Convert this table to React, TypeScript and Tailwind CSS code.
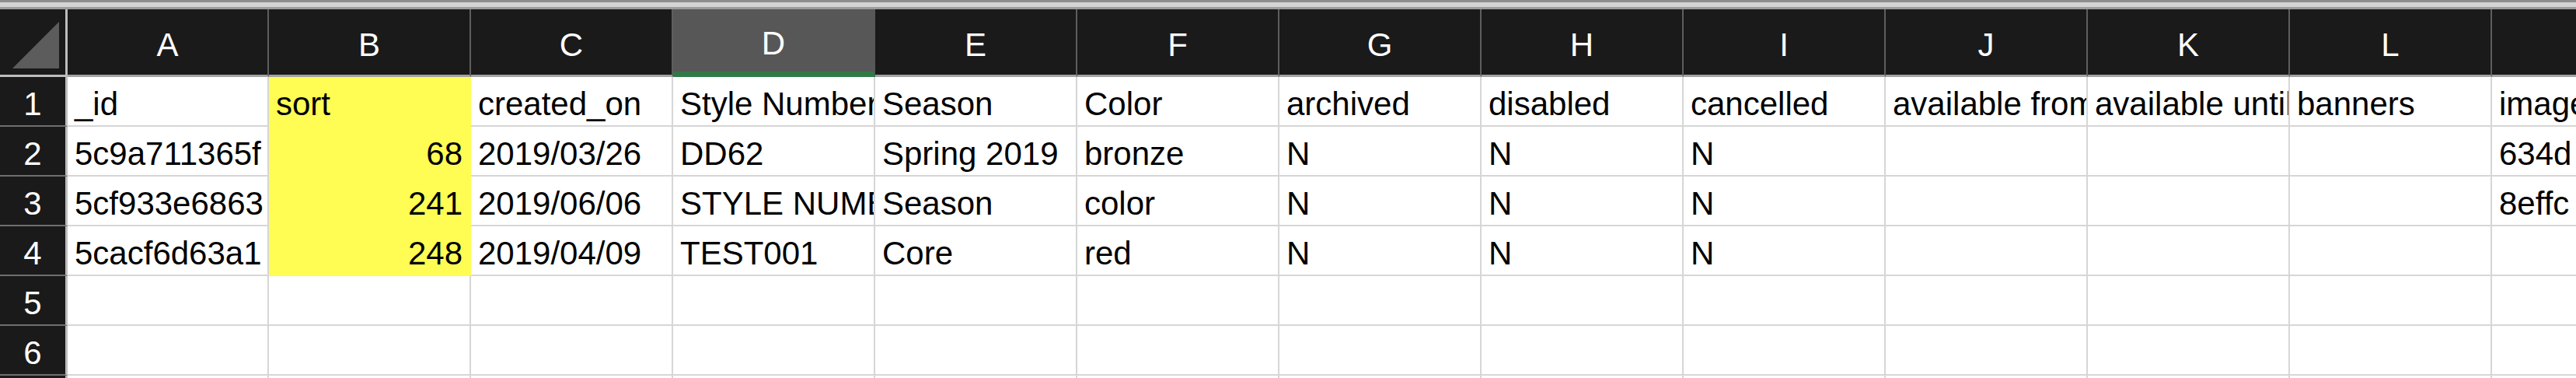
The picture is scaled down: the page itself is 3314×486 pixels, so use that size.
const letters = ["A", "B", "C", "D", "E", "F", "G", "H", "I", "J", "K", "L", "M"];

type Cell = { v: string; right?: boolean };

const rows: Cell[][] = [
	[
		{ v: "_id" },
		{ v: "sort" },
		{ v: "created_on" },
		{ v: "Style Number" },
		{ v: "Season" },
		{ v: "Color" },
		{ v: "archived" },
		{ v: "disabled" },
		{ v: "cancelled" },
		{ v: "available from" },
		{ v: "available until" },
		{ v: "banners" },
		{ v: "images" },
	],
	[
		{ v: "5c9a711365f" },
		{ v: "68", right: true },
		{ v: "2019/03/26" },
		{ v: "DD62" },
		{ v: "Spring 2019" },
		{ v: "bronze" },
		{ v: "N" },
		{ v: "N" },
		{ v: "N" },
		{ v: "" },
		{ v: "" },
		{ v: "" },
		{ v: "634d" },
	],
	[
		{ v: "5cf933e6863" },
		{ v: "241", right: true },
		{ v: "2019/06/06" },
		{ v: "STYLE NUMBER" },
		{ v: "Season" },
		{ v: "color" },
		{ v: "N" },
		{ v: "N" },
		{ v: "N" },
		{ v: "" },
		{ v: "" },
		{ v: "" },
		{ v: "8effc" },
	],
	[
		{ v: "5cacf6d63a1" },
		{ v: "248", right: true },
		{ v: "2019/04/09" },
		{ v: "TEST001" },
		{ v: "Core" },
		{ v: "red" },
		{ v: "N" },
		{ v: "N" },
		{ v: "N" },
		{ v: "" },
		{ v: "" },
		{ v: "" },
		{ v: "" },
	],
	[],
	[],
	[],
];

function colWidth(i: number) {
	return i === 0 ? "w-[259px]" : "w-[260px]";
}

function DataCell({ cell, col, yellow }: { cell?: Cell; col: number; yellow: boolean }) {
	return (
		<div
			className={`${colWidth(col)} shrink-0 h-[64px] flex items-end pb-[6px] px-[9px] overflow-hidden whitespace-nowrap border-r-2 border-b-2 ${
				yellow ? "bg-[#fffc54] border-[#fffc54]" : "bg-white border-[#d6d6d6]"
			} ${cell?.right ? "justify-end" : "justify-start"}`}
		>
			<span className="text-black">{cell?.v}</span>
		</div>
	);
}

export default function App() {
	return (
		<div className="w-[3314px] h-[486px] overflow-hidden bg-white font-['Liberation_Sans',Arial,sans-serif] text-[42px] leading-none">
			{/* window chrome strip */}
			<div className="h-[3px] bg-[#8e8e8e]" />
			<div className="h-[6px] bg-[#d4d4d4]" />
			<div className="h-[3px] bg-[#9c9c9c]" />

			{/* column letters */}
			<div className="flex h-[87px]">
				<div className="w-[87px] shrink-0 h-full bg-[#1a1a1a] border-r-[3px] border-b-[3px] border-[#bdbdbd] relative">
					<svg width="84" height="84" className="absolute left-0 top-0">
						<polygon points="16,76 76,76 76,16" fill="#5c5c5c" />
					</svg>
				</div>
				{letters.map((l, i) => (
					<div
						key={l}
						className={`${colWidth(i)} shrink-0 h-full flex items-center justify-center pt-[7px] text-white border-r-2 ${
							l === "D"
								? "bg-[#575757] border-r-[#575757] border-b-[7px] border-b-[#2f7a47]"
								: "bg-[#1a1a1a] border-r-[#5e5e5e] border-b-[3px] border-b-[#a2a2a2]"
						}`}
					>
						{l}
					</div>
				))}
			</div>

			{/* rows */}
			{rows.map((r, ri) => (
				<div key={ri} className="flex">
					<div className="w-[87px] shrink-0 h-[64px] flex items-end justify-center pb-[6px] bg-[#1a1a1a] text-white border-r-[3px] border-r-[#bdbdbd] border-b-2 border-b-[#6f6f6f]">
						{ri + 1}
					</div>
					{letters.map((l, ci) => (
						<DataCell key={l} cell={r[ci]} col={ci} yellow={ci === 1 && ri < 4} />
					))}
				</div>
			))}
		</div>
	);
}
